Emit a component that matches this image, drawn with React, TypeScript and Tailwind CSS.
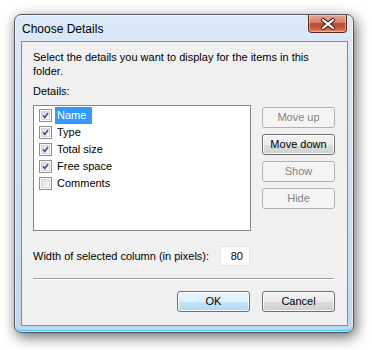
import React from "react";

const font = { fontFamily: '"Liberation Sans", Arial, sans-serif' };

function Check({ checked }: { checked: boolean }) {
  return (
    <div className="w-[13px] h-[13px] border border-[#8e8f8f] bg-white p-[1px] shrink-0">
      <div className="w-full h-full border border-[#d3d4d6] bg-gradient-to-br from-[#dcdcdc] to-[#fbfbfb] flex items-center justify-center">
        {checked && (
          <svg width="9" height="9" viewBox="0 0 9 9">
            <path d="M1.3 4.3 L3.6 7 L7.8 1.4" fill="none" stroke="#3c4f8f" strokeWidth="2" />
          </svg>
        )}
      </div>
    </div>
  );
}

function Btn({
  label,
  disabled,
  def,
}: {
  label: string;
  disabled?: boolean;
  def?: boolean;
}) {
  if (disabled) {
    return (
      <div className="w-[73px] h-[21px] rounded-[3px] border border-[#adb2b5] bg-[#f4f4f4] flex items-center justify-center text-[11px] text-[#838383]">
        {label}
      </div>
    );
  }
  if (def) {
    return (
      <div className="w-[73px] h-[21px] rounded-[3px] border border-[#3c7fb1] bg-[linear-gradient(to_bottom,#e9f5fc_0%,#ddf0fb_50%,#c5e5f8_51%,#b1d9f2_100%)] shadow-[inset_0_0_0_1px_rgba(255,255,255,0.8)] flex items-center justify-center text-[11px] text-black">
        {label}
      </div>
    );
  }
  return (
    <div className="w-[73px] h-[21px] rounded-[3px] border border-[#707070] bg-[linear-gradient(to_bottom,#f2f2f2_0%,#ebebeb_50%,#dddddd_51%,#cfcfcf_100%)] shadow-[inset_0_0_0_1px_rgba(255,255,255,0.8)] flex items-center justify-center text-[11px] text-black">
      {label}
    </div>
  );
}

export default function App() {
  const items = [
    { name: "Name", checked: true, sel: true },
    { name: "Type", checked: true },
    { name: "Total size", checked: true },
    { name: "Free space", checked: true },
    { name: "Comments", checked: false },
  ];
  return (
    <div className="w-[372px] h-[350px] bg-white pt-[14px] pl-[14px]" style={font}>
      <div className="w-[340px] h-[319px] rounded-[7px] border border-[#4b5763] bg-[linear-gradient(to_bottom,#dce9f6_0%,#d0e2f3_40%,#c0d8ef_100%)] shadow-[2px_4px_14px_rgba(0,0,0,0.6),inset_0_0_0_1px_rgba(255,255,255,0.6),inset_0_-2px_0_#48c6f0] flex flex-col pl-[6px]">
        <div className="h-[26px] flex items-start justify-between">
          <div className="text-[12px] text-black pl-[1px] pt-[7px] leading-[14px]">Choose Details</div>
          <div className="w-[39px] h-[18px] mr-[6px] rounded-b-[4px] border border-t-0 border-[#5e2b22] bg-[linear-gradient(to_bottom,#e6a796_0%,#d5806c_45%,#c24a33_50%,#c6533b_75%,#e08c70_100%)] shadow-[inset_0_0_0_1px_rgba(255,220,210,0.5)] flex items-center justify-center">
            <svg width="16" height="12" viewBox="0 0 16 12">
              <path d="M3 2 L13 10 M13 2 L3 10" stroke="#4a2a26" strokeWidth="4.2" strokeLinecap="round" />
              <path d="M3 2 L13 10 M13 2 L3 10" stroke="#ffffff" strokeWidth="2.2" strokeLinecap="round" />
            </svg>
          </div>
        </div>
        <div className="w-[327px] h-[285px] border border-[#7f8c99] bg-[#f0f0f0] pl-[11px] pr-[11px] pt-[8px] flex flex-col text-[11px] text-black">
          <div className="leading-[14px]">
            Select the details you want to display for the items in this
            <br />
            folder.
          </div>
          <div className="leading-[14px] mt-[6px]">Details:</div>
          <div className="flex mt-[7px] gap-[11px]">
            <div className="w-[218px] h-[126px] border border-[#828790] bg-white pt-[1px] pl-[5px] flex flex-col">
              {items.map((it) => (
                <div key={it.name} className="h-[17px] flex items-center">
                  <Check checked={it.checked} />
                  <div
                    className={
                      it.sel
                        ? "ml-[3px] h-[17px] px-[2px] pr-[6px] flex items-center bg-[#3399ff] text-white"
                        : "ml-[3px] h-[17px] px-[2px] flex items-center"
                    }
                  >
                    {it.name}
                  </div>
                </div>
              ))}
            </div>
            <div className="flex flex-col mt-[2px] gap-[6px]">
              <Btn label="Move up" disabled />
              <Btn label="Move down" />
              <Btn label="Show" disabled />
              <Btn label="Hide" disabled />
            </div>
          </div>
          <div className="flex items-center mt-[15px] h-[20px]">
            <div className="w-[187px]">Width of selected column (in pixels):</div>
            <div className="w-[30px] h-[20px] border border-[#e3e3e3] bg-white flex items-center justify-end pr-[6px]">
              80
            </div>
          </div>
          <div className="mt-[12px] h-[2px] border-t border-[#a0a0a0] border-b border-b-white w-[301px]" />
          <div className="flex justify-end gap-[12px] mt-[11px] pr-[1px]">
            <Btn label="OK" def />
            <Btn label="Cancel" />
          </div>
        </div>
      </div>
    </div>
  );
}
